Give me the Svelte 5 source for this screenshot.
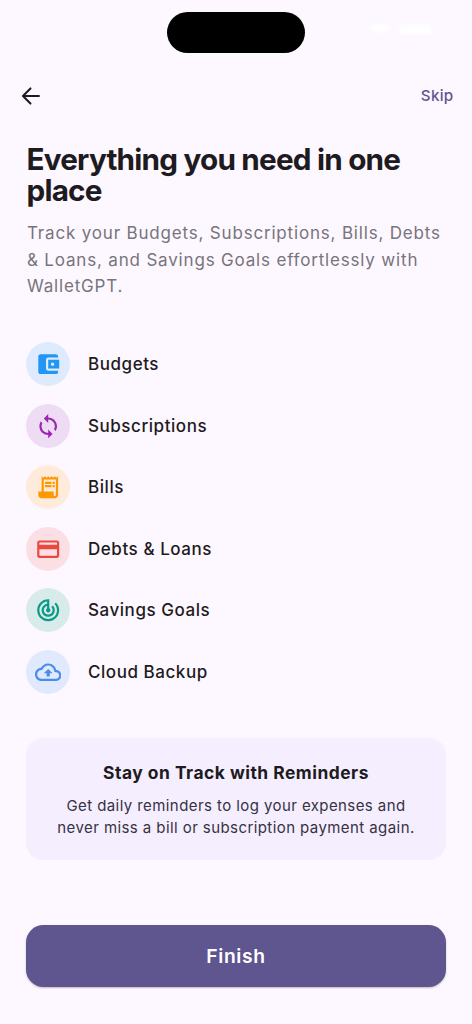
<script>
	const features = [
		{
			label: 'Budgets',
			tone: 'blue',
			path: 'M21 18v1c0 1.1-.9 2-2 2H5c-1.11 0-2-.9-2-2V5c0-1.1.89-2 2-2h14c1.1 0 2 .9 2 2v1h-9c-1.11 0-2 .9-2 2v8c0 1.1.89 2 2 2h9zm-9-2h10V8H12v8zm4-2.5c-.83 0-1.5-.67-1.5-1.5s.67-1.5 1.5-1.5 1.5.67 1.5 1.5-.67 1.5-1.5 1.5z'
		},
		{
			label: 'Subscriptions',
			tone: 'purple',
			path: 'M12 4V1L8 5l4 4V6c3.31 0 6 2.69 6 6 0 1.01-.25 1.97-.7 2.8l1.46 1.46C19.54 15.03 20 13.57 20 12c0-4.42-3.58-8-8-8zm0 14c-3.31 0-6-2.69-6-6 0-1.01.25-1.97.7-2.8L5.24 7.74C4.46 8.97 4 10.43 4 12c0 4.42 3.58 8 8 8v3l4-4-4-4v3z'
		},
		{
			label: 'Bills',
			tone: 'orange',
			path: 'M19.5 3.5L18 2l-1.5 1.5L15 2l-1.5 1.5L12 2l-1.5 1.5L9 2 7.5 3.5 6 2v14H3v3c0 1.66 1.34 3 3 3h12c1.66 0 3-1.34 3-3V2l-1.5 1.5zM19 19c0 .55-.45 1-1 1s-1-.45-1-1v-3H8V5h11v14zM9 7h6v2H9zM16 7h2v2h-2zM9 10h6v2H9zM16 10h2v2h-2z'
		},
		{
			label: 'Debts & Loans',
			tone: 'red',
			path: 'M20 4H4c-1.11 0-1.99.89-1.99 2L2 18c0 1.11.89 2 2 2h16c1.11 0 2-.89 2-2V6c0-1.11-.89-2-2-2zm-1 14H5c-.55 0-1-.45-1-1v-5h16v5c0 .55-.45 1-1 1zm1-10H4V6h16v2z'
		},
		{
			label: 'Savings Goals',
			tone: 'teal',
			path: 'M19.07 4.93l-1.41 1.41C19.1 7.79 20 9.79 20 12c0 4.42-3.58 8-8 8s-8-3.58-8-8c0-4.08 3.05-7.44 7-7.93v2.02C8.16 6.57 6 9.03 6 12c0 3.31 2.69 6 6 6s6-2.69 6-6c0-1.66-.67-3.16-1.76-4.24l-1.41 1.41C15.55 9.9 16 10.9 16 12c0 2.21-1.79 4-4 4s-4-1.79-4-4c0-1.86 1.28-3.41 3-3.86v2.14c-.6.35-1 .98-1 1.72 0 1.1.9 2 2 2s2-.9 2-2c0-.74-.4-1.38-1-1.72V2h-1C6.48 2 2 6.48 2 12s4.48 10 10 10 10-4.48 10-10c0-2.76-1.12-5.26-2.93-7.07z'
		},
		{
			label: 'Cloud Backup',
			tone: 'sky',
			path: 'M19.35 10.04C18.67 6.59 15.64 4 12 4 9.11 4 6.6 5.64 5.35 8.04 2.34 8.36 0 10.91 0 14c0 3.31 2.69 6 6 6h13c2.76 0 5-2.24 5-5 0-2.64-2.05-4.78-4.65-4.96zM19 18H6c-2.21 0-4-1.79-4-4 0-2.05 1.53-3.76 3.56-3.97l1.07-.11.5-.95C8.08 7.14 9.94 6 12 6c2.62 0 4.88 1.86 5.39 4.43l.3 1.5 1.53.11c1.56.1 2.78 1.41 2.78 2.96 0 1.65-1.35 3-3 3zM8 13h2.55v3h2.9v-3H16l-4-4z'
		}
	];
</script>

<div class="screen">
	<div class="status">
		<div class="side"></div>
		<div class="island"></div>
		<div class="side">
			<span class="wifi"></span>
			<span class="battery"></span>
		</div>
	</div>

	<header>
		<button class="back" aria-label="Back">
			<svg viewBox="0 0 24 24"><path d="M19.300 12H4.700M11.500 5L4.600 12l6.900 7" /></svg>
		</button>
		<button class="skip">Skip</button>
	</header>

	<main>
		<h1>Everything you need in one<br />place</h1>
		<p class="intro">
			Track your Budgets, Subscriptions, Bills, Debts<br />
			&amp; Loans, and Savings Goals effortlessly with<br />
			WalletGPT.
		</p>

		<ul>
			{#each features as feature}
				<li>
					<span class="badge {feature.tone}">
						<svg viewBox="0 0 24 24"><path d={feature.path} /></svg>
					</span>
					<span class="label">{feature.label}</span>
				</li>
			{/each}
		</ul>

		<section class="card">
			<h2>Stay on Track with Reminders</h2>
			<p>
				Get daily reminders to log your expenses and<br />
				never miss a bill or subscription payment again.
			</p>
		</section>
	</main>

	<footer>
		<button class="finish">Finish</button>
	</footer>
</div>

<style>
	:global(body) {
		background: #fdf7ff;
	}

	* {
		box-sizing: border-box;
		margin: 0;
		padding: 0;
	}

	.screen {
		display: flex;
		flex-direction: column;
		height: 1024px;
		overflow: hidden;
		background: #fdf7ff;
		color: #1d1b20;
		font-family: Inter, sans-serif;
		white-space: nowrap;
	}

	button {
		border: none;
		background: none;
		font-family: inherit;
		cursor: pointer;
	}

	.status {
		display: flex;
		height: 65px;
		padding-top: 12px;
	}

	.side {
		display: flex;
		flex: 1;
		justify-content: flex-end;
		gap: 10px;
		padding: 12px 40px 0 0;
	}

	/* light status icons, barely visible on the light background */
	.wifi,
	.battery {
		height: 9px;
		border-radius: 4px;
		background: #fff;
		filter: blur(1.5px);
		opacity: 0.8;
	}

	.wifi {
		width: 18px;
	}

	.battery {
		width: 33px;
		height: 11px;
	}

	.island {
		width: 138px;
		height: 41px;
		border-radius: 21px;
		background: #000;
	}

	header {
		display: flex;
		justify-content: space-between;
		align-items: center;
		height: 61px;
		padding: 0 18.5px 0 18px;
	}

	.back {
		width: 26px;
		height: 26px;
	}

	.back svg {
		display: block;
		width: 26px;
		height: 26px;
		fill: none;
		stroke: #1d1b20;
		stroke-width: 1.9;
		stroke-linecap: round;
		stroke-linejoin: round;
	}

	.skip {
		color: #5f568f;
		font-size: 15.2px;
		font-weight: 500;
		letter-spacing: 0.3px;
	}

	main {
		padding: 18px 26px 0;
	}

	h1 {
		padding-left: 0.5px;
		font-size: 29.7px;
		font-weight: 700;
		line-height: 30.7px;
		letter-spacing: -0.79px;
	}

	.intro {
		margin-top: 15px;
		padding-left: 1px;
		color: #77747b;
		font-size: 17px;
		line-height: 26.3px;
		letter-spacing: 0.82px;
	}

	ul {
		display: flex;
		flex-direction: column;
		gap: 17.5px;
		margin-top: 43px;
		list-style: none;
	}

	li {
		display: flex;
		align-items: center;
		gap: 18px;
	}

	.badge {
		display: flex;
		align-items: center;
		justify-content: center;
		width: 44px;
		height: 44px;
		border-radius: 50%;
	}

	.badge svg {
		width: 26.4px;
		height: 26.4px;
		fill: currentColor;
	}

	.blue {
		background: #deebfe;
		color: #2196f3;
	}

	.purple {
		background: #eedcf4;
		color: #9c27b0;
	}

	.orange {
		background: #ffebdb;
		color: #ff9800;
	}

	.red {
		background: #fcdfe5;
		color: #e94a3f;
	}

	.teal {
		background: #d8ebeb;
		color: #0b9a86;
	}

	.sky {
		background: #e0e9fe;
		color: #4a8cec;
	}

	.label {
		font-size: 17px;
		font-weight: 500;
		letter-spacing: 0.55px;
	}

	.card {
		height: 122px;
		margin-top: 44px;
		padding-top: 22px;
		border-radius: 17px;
		background: #f4eeff;
		text-align: center;
	}

	h2 {
		font-size: 17.4px;
		font-weight: 700;
		line-height: 26px;
		letter-spacing: 0.5px;
	}

	.card p {
		margin-top: 9px;
		color: #36323f;
		font-size: 15px;
		line-height: 22px;
		letter-spacing: 0.42px;
	}

	footer {
		margin-top: auto;
		padding: 0 26px 37px;
	}

	.finish {
		display: block;
		width: 100%;
		height: 62px;
		padding-bottom: 1px;
		border-radius: 17.5px;
		background: #5f568f;
		box-shadow: 0 1px 2px rgba(0, 0, 0, 0.25);
		color: #fff;
		font-size: 19.3px;
		font-weight: 600;
		letter-spacing: 0.65px;
	}
</style>
